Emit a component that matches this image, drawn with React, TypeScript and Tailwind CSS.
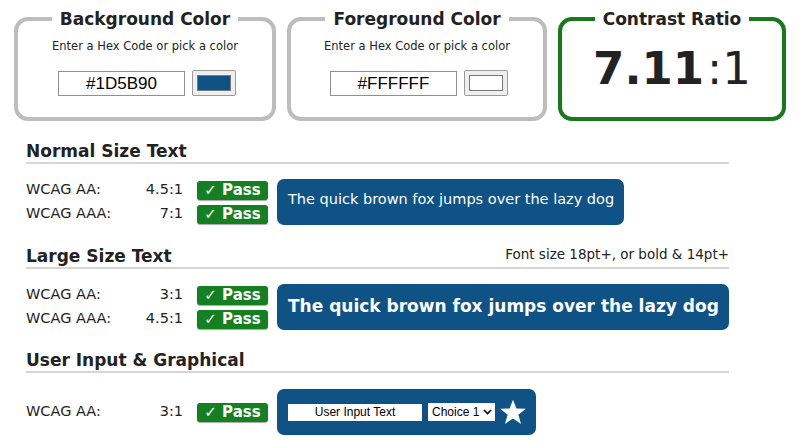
import React from "react";

const BLUE = "#0f5286";

function PassBadge() {
  return (
    <div className="flex h-[19px] w-[71px] items-center justify-center rounded-[3px] bg-[#148021] text-[15px] font-bold leading-none text-white shadow-[0_1px_1px_rgba(0,0,0,0.35)]">
      ✓ Pass
    </div>
  );
}

function Row({ label, ratio }: { label: string; ratio: string }) {
  return (
    <div className="flex h-[24px] items-center">
      <div className="w-[100px] text-[14.5px] text-[#222]">{label}</div>
      <div className="w-[57px] text-right text-[14.5px] text-[#222]">{ratio}</div>
      <div className="ml-[14px]">
        <PassBadge />
      </div>
    </div>
  );
}

function Heading({ title, right }: { title: string; right?: string }) {
  return (
    <div className="flex h-[22px] items-end justify-between border-b-2 border-[#d6d6d6] pb-[1px]">
      <div className="text-[17px] font-bold leading-[20px] text-[#222]">{title}</div>
      {right && <div className="pb-[5px] text-[13.5px] leading-[14px] text-[#222]">{right}</div>}
    </div>
  );
}

function ColorBox({ title, value, swatch, width }: { title: string; value: string; swatch: string; width: string }) {
  return (
    <fieldset className={`h-[113px] ${width} rounded-[14px] border-4 border-[#bdbdbd]`}>
      <legend className="mx-auto px-[8px] text-[17px] font-bold leading-[22px] text-[#222]">{title}</legend>
      <div className="mt-[8px] text-center text-[11.5px] text-[#222]">Enter a Hex Code or pick a color</div>
      <div className="mt-[15px] flex items-center justify-center gap-[7px] pl-[4px]">
        <div
          className="flex h-[25px] w-[127px] items-center justify-center border border-[#8f8f8f] bg-white text-[17px] text-black"
          style={{ fontFamily: '"Liberation Sans", Arial, sans-serif' }}
        >
          {value}
        </div>
        <div className="flex h-[26px] w-[44px] items-center justify-center rounded-[2px] border border-[#9a9a9a] bg-[#efefef] p-[4px]">
          <div className="h-full w-full border border-[#777]" style={{ background: swatch }} />
        </div>
      </div>
    </fieldset>
  );
}

export default function App() {
  return (
    <div
      className="h-[446px] w-[800px] overflow-hidden bg-white"
      style={{ fontFamily: '"DejaVu Sans", Verdana, sans-serif' }}
    >
      <div className="flex gap-[11px] pl-[14px] pt-[8px]">
        <ColorBox title="Background Color" value="#1D5B90" swatch={BLUE} width="w-[262px]" />
        <ColorBox title="Foreground Color" value="#FFFFFF" swatch="#ffffff" width="w-[260px]" />
        <fieldset className="h-[113px] w-[228px] rounded-[14px] border-[4px] border-[#17781c]">
          <legend className="mx-auto px-[8px] text-[17px] font-bold leading-[22px] text-[#222]">Contrast Ratio</legend>
          <div className="mt-[14px] flex items-baseline justify-center text-[#222]">
            <span className="text-[45px] font-bold leading-[50px]">7.11</span>
            <span className="ml-[3px] text-[45px] leading-[50px]">:1</span>
          </div>
        </fieldset>
      </div>

      <div className="ml-[26px] w-[703px]">
        <div className="mt-[21px]">
          <Heading title="Normal Size Text" />
        </div>
        <div className="mt-[14px] flex items-center">
          <div className="w-[251px]">
            <Row label="WCAG AA:" ratio="4.5:1" />
            <Row label="WCAG AAA:" ratio="7:1" />
          </div>
          <div
            className="flex h-[46px] w-[347px] items-start whitespace-nowrap rounded-[7px] pl-[11px] pt-[10px] text-[14.5px] text-white"
            style={{ background: BLUE }}
          >
            The quick brown fox jumps over the lazy dog
          </div>
        </div>

        <div className="mt-[21px]">
          <Heading title="Large Size Text" right="Font size 18pt+, or bold & 14pt+" />
        </div>
        <div className="mt-[14px] flex items-center">
          <div className="w-[251px]">
            <Row label="WCAG AA:" ratio="3:1" />
            <Row label="WCAG AAA:" ratio="4.5:1" />
          </div>
          <div
            className="flex h-[46px] w-[452px] items-center whitespace-nowrap rounded-[7px] pl-[11px] text-[17px] font-bold text-white"
            style={{ background: BLUE }}
          >
            The quick brown fox jumps over the lazy dog
          </div>
        </div>

        <div className="mt-[20px]">
          <Heading title="User Input & Graphical" />
        </div>
        <div className="mt-[16px] flex items-center">
          <div className="w-[251px]">
            <Row label="WCAG AA:" ratio="3:1" />
          </div>
          <div
            className="flex h-[46px] w-[259px] items-center rounded-[7px] pl-[11px]"
            style={{ background: BLUE, fontFamily: '"Liberation Sans", Arial, sans-serif' }}
          >
            <div className="flex h-[17px] w-[134px] items-center justify-center bg-white text-[12px] text-black">
              User Input Text
            </div>
            <div className="ml-[6px] flex h-[18px] w-[67px] items-center justify-between bg-white pl-[4px] pr-[3px] text-[12px] text-black">
              <span>Choice 1</span>
              <svg width="9" height="6" viewBox="0 0 9 6">
                <path d="M1 1 L4.5 4.5 L8 1" fill="none" stroke="#000" strokeWidth="1.6" />
              </svg>
            </div>
            <svg className="ml-[4px]" width="28" height="28" viewBox="0 0 24 24">
              <polygon
                points="12,1.5 14.9,9 23,9.3 16.6,14.3 18.9,22.2 12,17.6 5.1,22.2 7.4,14.3 1,9.3 9.1,9"
                fill="#fff"
              />
            </svg>
          </div>
        </div>
      </div>
    </div>
  );
}
